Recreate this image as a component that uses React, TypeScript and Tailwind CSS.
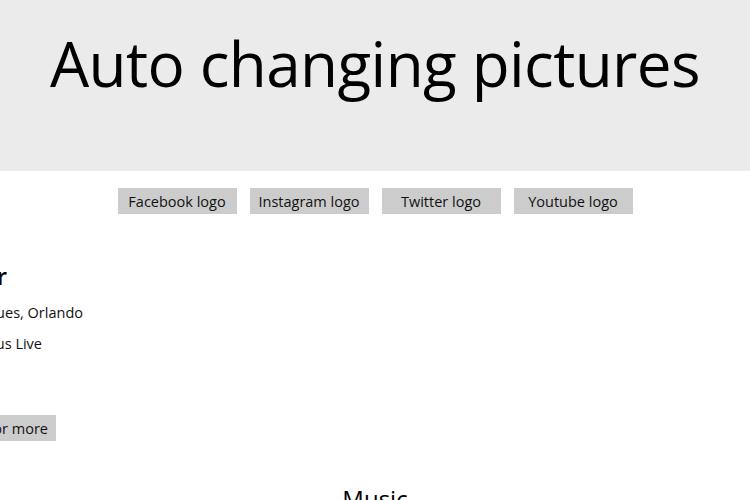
import React from "react";

const font = { fontFamily: '"Open Sans", "Noto Sans", sans-serif' };

export default function App() {
  const buttons = ["Facebook logo", "Instagram logo", "Twitter logo", "Youtube logo"];
  return (
    <div className="w-[750px] h-[500px] overflow-hidden bg-white text-black" style={font}>
      <header className="h-[171px] bg-[#ebebeb] flex justify-center pt-[32px]">
        <h1 className="text-[62px] leading-none font-normal whitespace-nowrap tracking-[-0.6px]">
          Auto changing pictures
        </h1>
      </header>

      <nav className="mt-[17px] flex justify-center gap-[13px]">
        {buttons.map((b) => (
          <button
            key={b}
            className="w-[119px] h-[26px] bg-[#cccccc] text-[14.5px] leading-[27px] text-[#111] text-center whitespace-nowrap"
          >
            {b}
          </button>
        ))}
      </nav>

      <section className="mt-[47px] flex flex-col items-start">
        <div className="w-[7px] overflow-hidden flex justify-end">
          <h3 className="text-[24px] leading-[30px] font-semibold whitespace-nowrap shrink-0">Next Concert Tour</h3>
        </div>
        <div className="mt-[12px] w-[83px] overflow-hidden flex justify-end">
          <p className="text-[14.5px] leading-[20px] text-[#111] whitespace-nowrap shrink-0">House of Blues, Orlando</p>
        </div>
        <div className="mt-[11px] w-[42px] overflow-hidden flex justify-end">
          <p className="text-[14.5px] leading-[20px] text-[#111] whitespace-nowrap shrink-0">Nexus Live</p>
        </div>
        <div className="mt-[61px] w-[56px] overflow-hidden flex justify-end">
          <button className="h-[26px] bg-[#cccccc] text-[14.5px] leading-[28px] text-[#111] pl-[10px] pr-[8px] whitespace-nowrap shrink-0">
            Click for more
          </button>
        </div>
      </section>

      <h2 className="mt-[43px] text-center text-[24px] leading-[30px] font-normal">Music</h2>
    </div>
  );
}
